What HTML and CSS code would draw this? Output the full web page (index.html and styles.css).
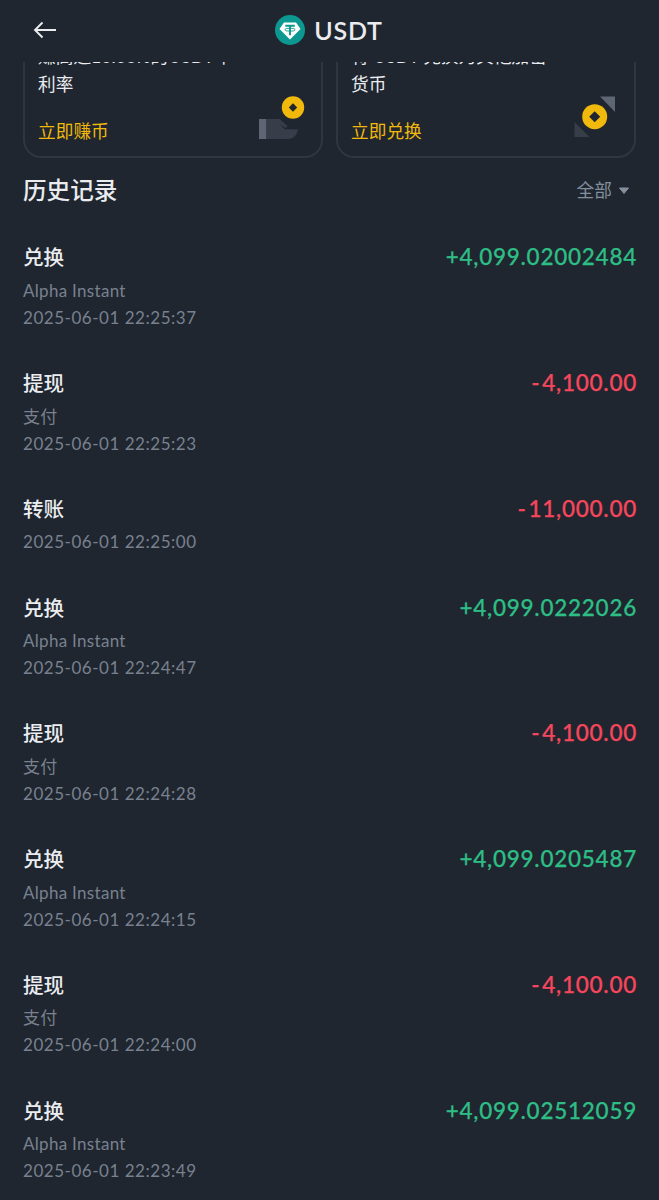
FILE: index.html
```html
<!DOCTYPE html>
<html lang="zh-CN">
<head>
  <meta charset="UTF-8">
  <meta name="viewport" content="width=device-width, initial-scale=1.0">
  <title>USDT</title>
  <link rel="stylesheet" href="styles.css">
</head>
<body>

<header class="header">
  <svg class="back" viewBox="0 0 24 18" width="24" height="18">
    <path d="M9.500 1.500L2 9l7.500 7.500M2 9h21" fill="none" stroke="#eaecef" stroke-width="1.900"/>
  </svg>
  <div class="coin">
    <svg viewBox="0 0 30 30" width="30" height="30">
      <circle cx="15" cy="15" r="15" fill="#0c9891"/>
      <path d="M9 7.500h12l4.500 6.500L15 24.500 4.500 14z" fill="#fff"/>
      <path d="M10.300 10.800h9.500M15 10.800v9.500" fill="none" stroke="#0c9891" stroke-width="1.900"/>
      <ellipse cx="15" cy="14.700" rx="5.200" ry="1.500" fill="none" stroke="#0c9891" stroke-width=".9"/>
    </svg>
    <span class="coin-name">USDT</span>
  </div>
</header>

<div class="cards">
  <div class="card">
    <div class="card-text"><div class="card-line">赚高达10.00%的USDT年</div>利率</div>
    <div class="card-link">立即赚币</div>
    <svg class="card-icon" viewBox="0 0 44 44" width="44" height="44">
      <path d="M1 23h7.500v20H1z" fill="#5e6673"/>
      <path d="M8.500 23H21.500l8 7-1.800 2-5.700-3.500 5 4.800h13c-.8 6-4.500 9.700-10 9.700H8.500z" fill="#373d49"/>
      <circle cx="35" cy="11.500" r="11.200" fill="#f0b90b"/>
      <path d="M35 7.300l4.200 4.200-4.200 4.200-4.200-4.200z" fill="#1f262f"/>
    </svg>
  </div>
  <div class="card">
    <div class="card-text"><div class="card-line">将 USDT 兑换为其他加密</div>货币</div>
    <div class="card-link">立即兑换</div>
    <svg class="card-icon" viewBox="0 0 44 44" width="44" height="44">
      <path d="M29 .5h15V16z" fill="#5e6673"/>
      <path d="M3.500 26v15h15z" fill="#373d49"/>
      <circle cx="23.700" cy="20.700" r="12.500" fill="#f0b90b"/>
      <path d="M23.700 15.200l5.500 5.500-5.500 5.500-5.500-5.500z" fill="#1f262f"/>
    </svg>
  </div>
</div>

<div class="history-head">
  <h2 class="history-title">历史记录</h2>
  <div class="filter">全部
    <svg class="caret" viewBox="0 0 12 8" width="12" height="8"><path d="M1.500 1h9L6 6.500z" fill="#848e9c" stroke="#848e9c" stroke-linejoin="round"/></svg>
  </div>
</div>

<div class="history">
  <div class="row">
    <div class="info">
      <div class="type">兑换</div>
      <div class="note">Alpha Instant</div>
      <div class="date">2025-06-01 22:25:37</div>
    </div>
    <div class="amount plus">+4,099.02002484</div>
  </div>
  <div class="row">
    <div class="info">
      <div class="type">提现</div>
      <div class="note">支付</div>
      <div class="date">2025-06-01 22:25:23</div>
    </div>
    <div class="amount minus">-4,100.00</div>
  </div>
  <div class="row">
    <div class="info">
      <div class="type">转账</div>
      <div class="date">2025-06-01 22:25:00</div>
    </div>
    <div class="amount minus">-11,000.00</div>
  </div>
  <div class="row">
    <div class="info">
      <div class="type">兑换</div>
      <div class="note">Alpha Instant</div>
      <div class="date">2025-06-01 22:24:47</div>
    </div>
    <div class="amount plus">+4,099.0222026</div>
  </div>
  <div class="row">
    <div class="info">
      <div class="type">提现</div>
      <div class="note">支付</div>
      <div class="date">2025-06-01 22:24:28</div>
    </div>
    <div class="amount minus">-4,100.00</div>
  </div>
  <div class="row">
    <div class="info">
      <div class="type">兑换</div>
      <div class="note">Alpha Instant</div>
      <div class="date">2025-06-01 22:24:15</div>
    </div>
    <div class="amount plus">+4,099.0205487</div>
  </div>
  <div class="row">
    <div class="info">
      <div class="type">提现</div>
      <div class="note">支付</div>
      <div class="date">2025-06-01 22:24:00</div>
    </div>
    <div class="amount minus">-4,100.00</div>
  </div>
  <div class="row">
    <div class="info">
      <div class="type">兑换</div>
      <div class="note">Alpha Instant</div>
      <div class="date">2025-06-01 22:23:49</div>
    </div>
    <div class="amount plus">+4,099.02512059</div>
  </div>
</div>

</body>
</html>
```
FILE: styles.css
```css
* {
  box-sizing: border-box;
}
body {
  margin: 0;
  height: 1200px;
  overflow: hidden;
  background: #1f262f;
  color: #eaecef;
  font-family: Lato, "Noto Sans CJK SC", sans-serif;
}
.header {
  display: grid;
  grid-template-columns: 1fr auto 1fr;
  align-items: center;
  height: 62px;
  padding: 0 23px 3px 33px;
}
.coin {
  display: flex;
  align-items: center;
  gap: 9px;
  padding-right: 11px;
}
.coin-name {
  font-size: 25px;
  line-height: 30px;
  font-weight: 600;
  letter-spacing: 0.8px;
}
/* scrolled under the header, so the top of the cards is cut off */
.cards {
  display: flex;
  align-items: flex-end;
  gap: 13px;
  height: 96px;
  padding: 0 23px;
  overflow: hidden;
}
.card {
  position: relative;
  flex: 1;
  height: 150px;
  padding: 33px 13px 0;
  border: 2px solid #2f363f;
  border-radius: 18px;
}
.card-text {
  font-size: 17.700px;
  line-height: 27px;
  white-space: nowrap;
}
.card-line {
  margin-bottom: 1px;
}
.card-link {
  margin-top: 20px;
  font-size: 17.700px;
  line-height: 27px;
  color: #f0b90b;
}
.card-icon {
  position: absolute;
  right: 19px;
  bottom: 16px;
  overflow: visible;
}
.history-head {
  display: flex;
  justify-content: space-between;
  align-items: center;
  height: 62px;
  padding: 0 29px 0 23px;
}
.history-title {
  margin: 0;
  font-size: 23.600px;
  font-weight: 500;
}
.filter {
  display: flex;
  align-items: center;
  gap: 6px;
  font-size: 17.700px;
  color: #848e9c;
}
.caret {
  margin-top: 3px;
}
.history {
  margin-top: 17.250px;
  padding: 0 23px;
}
.row {
  display: flex;
  justify-content: space-between;
  padding-bottom: 32.250px;
}
.type {
  height: 39.500px;
  font-size: 20.600px;
  line-height: 40px;
  font-weight: 500;
}
.note, .date {
  height: 27px;
  font-size: 17px;
  line-height: 27px;
  letter-spacing: 0.3px;
  color: #79818f;
}
.date {
  letter-spacing: 0.53px;
}
.amount {
  font-size: 22.500px;
  line-height: 40.500px;
  font-weight: 500;
  letter-spacing: 0.75px;
  margin-right: -1px;
  -webkit-text-stroke: 0.25px currentColor;
}
.minus::first-letter {
  letter-spacing: 2.500px;
}
.plus {
  color: #2ebd85;
}
.minus {
  color: #f6465d;
}
```
